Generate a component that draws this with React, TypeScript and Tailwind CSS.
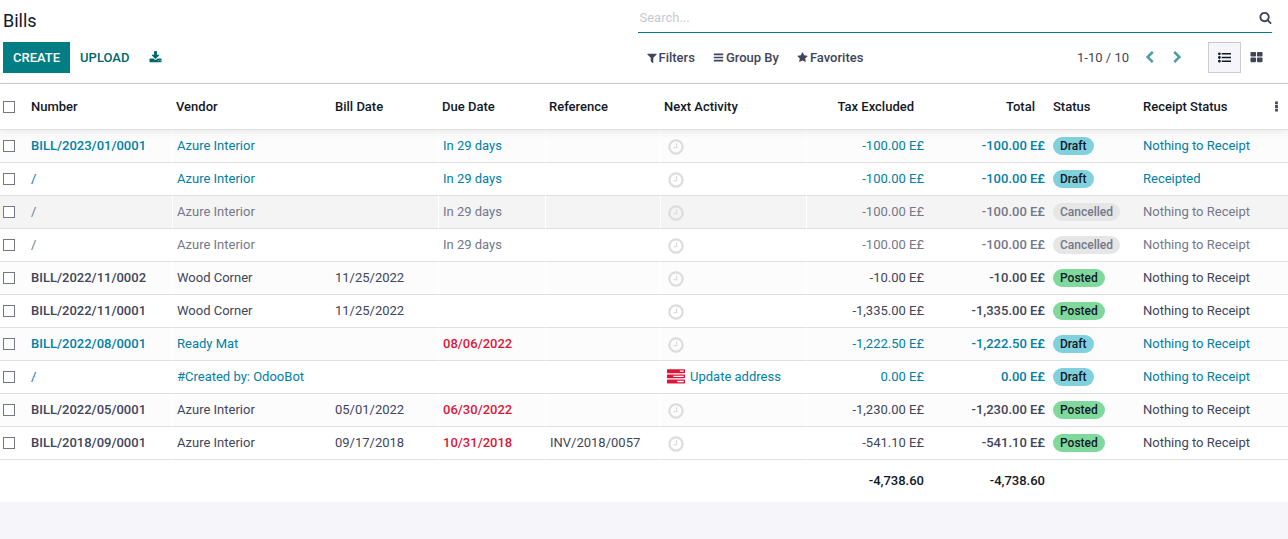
import React from "react";

const ICONS = {
  clock:
    "M1024 544v448q0 14-9 23t-23 9h-320q-14 0-23-9t-9-23v-64q0-14 9-23t23-9h224v-352q0-14 9-23t23-9h64q14 0 23 9t9 23zm416 352q0-148-73-273t-198-198-273-73-273 73-198 198-73 273 73 273 198 198 273 73 273-73 198-198 73-273zm224 0q0 209-103 385.5t-279.5 279.5-385.5 103-385.5-103-279.5-279.5-103-385.5 103-385.5 279.5-279.5 385.5-103 385.5 103 279.5 279.5 103 385.5z",
  tasks:
    "M1024 1408h640v-128h-640v128zm-384-512h1024v-128h-1024v128zm640-512h384v-128h-384v128zm512 832v256q0 26-19 45t-45 19h-1664q-26 0-45-19t-19-45v-256q0-26 19-45t45-19h1664q26 0 45 19t19 45zm0-512v256q0 26-19 45t-45 19h-1664q-26 0-45-19t-19-45v-256q0-26 19-45t45-19h1664q26 0 45 19t19 45zm0-512v256q0 26-19 45t-45 19h-1664q-26 0-45-19t-19-45v-256q0-26 19-45t45-19h1664q26 0 45 19t19 45z",
  download:
    "M1344 1344q0-26-19-45t-45-19-45 19-19 45 19 45 45 19 45-19 19-45zm256 0q0-26-19-45t-45-19-45 19-19 45 19 45 45 19 45-19 19-45zm128-224v320q0 40-28 68t-68 28h-1472q-40 0-68-28t-28-68v-320q0-40 28-68t68-28h465l135 136q58 56 136 56t136-56l136-136h464q40 0 68 28t28 68zm-325-569q17 41-14 70l-448 448q-18 19-45 19t-45-19l-448-448q-31-29-14-70 17-39 59-39h256v-448q0-26 19-45t45-19h256q26 0 45 19t19 45v448h256q42 0 59 39z",
  filter:
    "M1595 295q17 41-14 70l-493 493v742q0 42-39 59-13 5-25 5-27 0-45-19l-256-256q-19-19-19-45v-486l-493-493q-31-29-14-70 17-39 59-39h1280q42 0 59 39z",
  bars: "M1664 1344v128q0 26-19 45t-45 19h-1408q-26 0-45-19t-19-45v-128q0-26 19-45t45-19h1408q26 0 45 19t19 45zm0-512v128q0 26-19 45t-45 19h-1408q-26 0-45-19t-19-45v-128q0-26 19-45t45-19h1408q26 0 45 19t19 45zm0-512v128q0 26-19 45t-45 19h-1408q-26 0-45-19t-19-45v-128q0-26 19-45t45-19h1408q26 0 45 19t19 45z",
  star: "M1728 647q0 22-26 48l-363 354 86 500q1 7 1 20 0 21-10.5 35.5t-30.5 14.5q-19 0-40-12l-449-236-449 236q-22 12-40 12-21 0-31.5-14.5t-10.5-35.5q0-6 2-20l86-500-364-354q-25-27-25-48 0-37 56-46l502-73 225-455q19-41 49-41t49 41l225 455 502 73q56 9 56 46z",
  search:
    "M1216 832q0-185-131.5-316.5t-316.5-131.5-316.5 131.5-131.5 316.5 131.5 316.5 316.5 131.5 316.5-131.5 131.5-316.5zm512 832q0 52-38 90t-90 38q-54 0-90-38l-343-342q-179 124-399 124-143 0-273.5-55.5t-225-150-150-225-55.5-273.5 55.5-273.5 150-225 225-150 273.5-55.5 273.5 55.5 225 150 150 225 55.5 273.5q0 220-124 399l343 343q37 37 37 90z",
  left: "M1427 301l-531 531 531 531q19 19 19 45t-19 45l-166 166q-19 19-45 19t-45-19l-742-742q-19-19-19-45t19-45l742-742q19-19 45-19t45 19l166 166q19 19 19 45t-19 45z",
  right:
    "M1363 877l-742 742q-19 19-45 19t-45-19l-166-166q-19-19-19-45t19-45l531-531-531-531q-19-19-19-45t19-45l166-166q19-19 45-19t45 19l742 742q19 19 19 45t-19 45z",
  list: "M0 1408a192 192 0 1 0 384 0a192 192 0 1 0-384 0zM0 896a192 192 0 1 0 384 0a192 192 0 1 0-384 0zM0 384a192 192 0 1 0 384 0a192 192 0 1 0-384 0zM512 1300h1280v216h-1280zM512 788h1280v216h-1280zM512 276h1280v216h-1280z",
  kanban:
    "M832 1024v384q0 52-38 90t-90 38h-512q-52 0-90-38t-38-90v-384q0-52 38-90t90-38h512q52 0 90 38t38 90zm0-768v384q0 52-38 90t-90 38h-512q-52 0-90-38t-38-90v-384q0-52 38-90t90-38h512q52 0 90 38t38 90zm896 768v384q0 52-38 90t-90 38h-512q-52 0-90-38t-38-90v-384q0-52 38-90t90-38h512q52 0 90 38t38 90zm0-768v384q0 52-38 90t-90 38h-512q-52 0-90-38t-38-90v-384q0-52 38-90t90-38h512q52 0 90 38t38 90z",
  dots: "M704 192h384v384h-384zM704 704h384v384h-384zM704 1216h384v384h-384z",
};

function Icon({ name, className }: { name: keyof typeof ICONS; className: string }) {
  return (
    <svg viewBox="0 0 1792 1792" fill="currentColor" aria-hidden="true" className={`shrink-0 ${className}`}>
      <path d={ICONS[name]} />
    </svg>
  );
}

type Status = "Draft" | "Cancelled" | "Posted";

interface Bill {
  number: string;
  vendor: string;
  billDate?: string;
  dueDate?: string;
  overdue?: boolean;
  reference?: string;
  activity?: string;
  amount: string;
  status: Status;
  receipt: string;
  active?: boolean;
}

const BILLS: Bill[] = [
  { number: "BILL/2023/01/0001", vendor: "Azure Interior", dueDate: "In 29 days", amount: "-100.00 E£", status: "Draft", receipt: "Nothing to Receipt" },
  { number: "/", vendor: "Azure Interior", dueDate: "In 29 days", amount: "-100.00 E£", status: "Draft", receipt: "Receipted" },
  { number: "/", vendor: "Azure Interior", dueDate: "In 29 days", amount: "-100.00 E£", status: "Cancelled", receipt: "Nothing to Receipt", active: true },
  { number: "/", vendor: "Azure Interior", dueDate: "In 29 days", amount: "-100.00 E£", status: "Cancelled", receipt: "Nothing to Receipt" },
  { number: "BILL/2022/11/0002", vendor: "Wood Corner", billDate: "11/25/2022", amount: "-10.00 E£", status: "Posted", receipt: "Nothing to Receipt" },
  { number: "BILL/2022/11/0001", vendor: "Wood Corner", billDate: "11/25/2022", amount: "-1,335.00 E£", status: "Posted", receipt: "Nothing to Receipt" },
  { number: "BILL/2022/08/0001", vendor: "Ready Mat", dueDate: "08/06/2022", overdue: true, amount: "-1,222.50 E£", status: "Draft", receipt: "Nothing to Receipt" },
  { number: "/", vendor: "#Created by: OdooBot", activity: "Update address", amount: "0.00 E£", status: "Draft", receipt: "Nothing to Receipt" },
  { number: "BILL/2022/05/0001", vendor: "Azure Interior", billDate: "05/01/2022", dueDate: "06/30/2022", overdue: true, amount: "-1,230.00 E£", status: "Posted", receipt: "Nothing to Receipt" },
  { number: "BILL/2018/09/0001", vendor: "Azure Interior", billDate: "09/17/2018", dueDate: "10/31/2018", overdue: true, reference: "INV/2018/0057", amount: "-541.10 E£", status: "Posted", receipt: "Nothing to Receipt" },
];

const ROW_TEXT: Record<Status, string> = {
  Draft: "text-[#0180a5]",
  Cancelled: "text-[#74788a]",
  Posted: "text-[#41455a]",
};

const BADGE: Record<Status, string> = {
  Draft: "bg-[#80d0dd] text-[#111827]",
  Cancelled: "bg-[#e6e6e6] text-[#74788a]",
  Posted: "bg-[#80d99c] text-[#111827]",
};

const CELL = "h-[33px] px-1 pb-px border-b border-[#dee0e5]";
const SPLIT = "border-l border-l-white";

function Check({ label }: { label: string }) {
  return (
    <input
      type="checkbox"
      aria-label={label}
      className="ml-[3px] block size-3 appearance-none border border-[#74788a] bg-white checked:bg-[#017e84]"
    />
  );
}

function BillRow({ bill, index }: { bill: Bill; index: number }) {
  const background = bill.active ? "bg-[#f4f4f4]" : index % 2 === 0 ? "bg-[#fcfcfc]" : "bg-white";
  return (
    <tr className={`${background} ${ROW_TEXT[bill.status]}`}>
      <td className="h-[33px] border-b border-[#dee0e5] p-0">
        <Check label={`Select ${bill.number}`} />
      </td>
      <td className={`${CELL} ${bill.number === "/" ? "" : "font-medium"}`}>{bill.number}</td>
      <td className={`${CELL} ${SPLIT}`}>{bill.vendor}</td>
      <td className={CELL}>{bill.billDate}</td>
      <td className={`${CELL} ${SPLIT} ${bill.overdue ? "font-medium text-[#dc1638]" : ""}`}>{bill.dueDate}</td>
      <td className={`${CELL} ${SPLIT}`}>{bill.reference}</td>
      <td className={`${CELL} ${SPLIT}`}>
        {bill.activity ? (
          <a href="#activity" className="flex items-center gap-[5px] pl-0.5">
            <Icon name="tasks" className="size-[18px] text-[#dc1638]" />
            {bill.activity}
          </a>
        ) : (
          <button type="button" aria-label="Schedule activity" className="block pt-0.5 pl-0.5 text-[#dddddd]">
            <Icon name="clock" className="size-[18px]" />
          </button>
        )}
      </td>
      <td className={`${CELL} ${SPLIT} text-right`}>{bill.amount}</td>
      <td className={`${CELL} text-right font-medium`}>{bill.amount}</td>
      <td className={CELL}>
        <span className={`block w-fit rounded-full px-[7px] text-xs leading-[18px] font-medium ${BADGE[bill.status]}`}>
          {bill.status}
        </span>
      </td>
      <td className={CELL}>{bill.receipt}</td>
      <td className="border-b border-[#dee0e5]" />
    </tr>
  );
}

const HEAD = "h-[46px] px-1 border-b border-[#dee0e5] font-medium";

export default function App() {
  return (
    <div className="min-h-screen bg-[#f5f5fa] font-[Roboto,sans-serif] text-[13px] leading-5 text-[#41455a]">
      <header className="grid grid-cols-2 border-b border-[#c9ccd2] bg-white pb-[10px] pl-[3px]">
        <div>
          <h1 className="flex h-[42px] items-center text-lg text-[#111827]">Bills</h1>
          <div className="flex h-[31px] items-center font-medium">
            <button type="button" className="h-full bg-[#017e84] px-[10px] text-white">CREATE</button>
            <button type="button" className="h-full px-[10px] text-[#01666b]">UPLOAD</button>
            <button type="button" aria-label="Download" className="h-full px-[10px] text-[#01666b]">
              <Icon name="download" className="size-[13px]" />
            </button>
          </div>
        </div>
        <div className="-ml-2 pr-4">
          <div className="mb-[9px] flex h-[33px] items-center border-b border-[#017e84] pt-[3px] pl-0.5">
            <input
              type="text"
              aria-label="Search"
              placeholder="Search..."
              autoFocus
              className="min-w-0 flex-1 caret-black outline-none placeholder:text-[#c8cacf]"
            />
            <button type="button" aria-label="Search bills">
              <Icon name="search" className="size-[13px]" />
            </button>
          </div>
          <div className="flex h-[31px] items-center justify-between">
            <div className="flex gap-[18px] pl-2 font-medium">
              <button type="button" className="flex items-center gap-px">
                <Icon name="filter" className="size-3" />
                Filters
              </button>
              <button type="button" className="flex items-center gap-0.5">
                <Icon name="bars" className="size-[11px]" />
                Group By
              </button>
              <button type="button" className="flex items-center gap-0.5">
                <Icon name="star" className="size-[11px]" />
                Favorites
              </button>
            </div>
            <div className="flex h-full items-center">
              <span className="pr-[14px]">1-10 / 10</span>
              <button type="button" aria-label="Previous page" className="text-[#4d9ea2]">
                <Icon name="left" className="size-[13px]" />
              </button>
              <button type="button" aria-label="Next page" className="ml-[15px] text-[#4d9ea2]">
                <Icon name="right" className="size-[13px]" />
              </button>
              <button
                type="button"
                aria-label="List view"
                className="ml-6 flex h-full w-[33px] items-center justify-center border border-[#c9ccd2] bg-[#f5f5fa] text-[#111827]"
              >
                <Icon name="list" className="size-[13px]" />
              </button>
              <button type="button" aria-label="Kanban view" className="flex h-full w-[31px] items-center justify-center">
                <Icon name="kanban" className="size-[13px]" />
              </button>
            </div>
          </div>
        </div>
      </header>

      <table className="w-full table-fixed border-separate border-spacing-0 bg-white whitespace-nowrap">
        <colgroup>
          <col className="w-[27px]" />
          <col className="w-[145px]" />
          <col />
          <col className="w-[107px]" />
          <col className="w-[107px]" />
          <col className="w-[115px]" />
          <col className="w-[146px]" />
          <col className="w-[122px]" />
          <col className="w-[121px]" />
          <col className="w-[90px]" />
          <col className="w-[126px]" />
          <col className="w-[23px]" />
        </colgroup>
        <thead className="relative bg-white text-left text-[#111827] shadow-[0_2px_8px_rgba(0,0,0,0.08)]">
          <tr>
            <th className="border-b border-[#dee0e5] p-0">
              <Check label="Select all" />
            </th>
            <th className={HEAD}>Number</th>
            <th className={HEAD}>Vendor</th>
            <th className={HEAD}>Bill Date</th>
            <th className={HEAD}>Due Date</th>
            <th className={HEAD}>Reference</th>
            <th className={HEAD}>Next Activity</th>
            <th className={`${HEAD} text-right`}><span className="pr-[10px]">Tax Excluded</span></th>
            <th className={`${HEAD} text-right`}><span className="pr-[10px]">Total</span></th>
            <th className={HEAD}>Status</th>
            <th className={HEAD}>Receipt Status</th>
            <th className="border-b border-[#dee0e5] p-0">
              <button type="button" aria-label="Optional columns" className="flex w-full justify-center text-[#41455a]">
                <Icon name="dots" className="size-[13px]" />
              </button>
            </th>
          </tr>
        </thead>
        <tbody>
          {BILLS.map((bill, index) => (
            <BillRow key={index} bill={bill} index={index} />
          ))}
        </tbody>
        <tfoot className="text-right font-medium text-[#111827]">
          <tr>
            <td colSpan={7} className="h-[42px]" />
            <td className="px-1">-4,738.60</td>
            <td className="px-1">-4,738.60</td>
            <td colSpan={3} />
          </tr>
        </tfoot>
      </table>
    </div>
  );
}
